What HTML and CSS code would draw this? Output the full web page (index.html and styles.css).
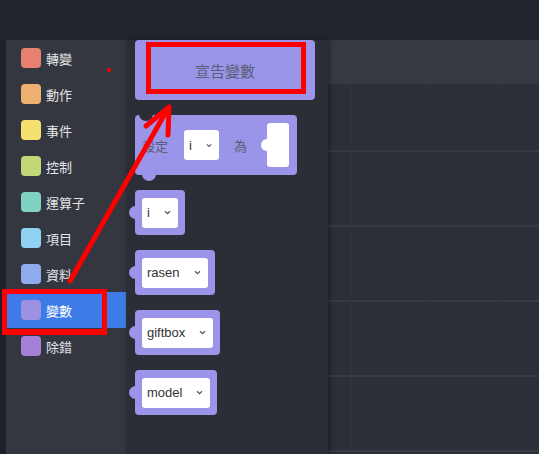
FILE: index.html
```html
<!DOCTYPE html>
<html>

<head>
  <link rel="stylesheet" href="styles.css">
</head>

<body>
  <div class="topbar"></div>

  <div class="main">
    <div class="edge"></div>

    <div class="categories">
      <div class="cat"><span class="swatch c-turn"></span>轉變</div>
      <div class="cat"><span class="swatch c-motion"></span>動作</div>
      <div class="cat"><span class="swatch c-event"></span>事件</div>
      <div class="cat"><span class="swatch c-control"></span>控制</div>
      <div class="cat"><span class="swatch c-operator"></span>運算子</div>
      <div class="cat"><span class="swatch c-list"></span>項目</div>
      <div class="cat"><span class="swatch c-data"></span>資料</div>
      <div class="cat active"><span class="swatch c-var"></span>變數</div>
      <div class="cat"><span class="swatch c-debug"></span>除錯</div>
    </div>

    <div class="flyout">
      <div class="block btn-block">宣告變數</div>

      <div class="block set-block">
        <span class="label">設定</span>
        <span class="dropdown">i
          <svg class="chev" width="7" height="5" viewBox="0 0 7 5"><path d="M1 1.2 L3.5 3.6 L6 1.2" fill="none" stroke="#555" stroke-width="1.2"/></svg>
        </span>
        <span class="label to">為</span>
        <span class="slot"></span>
      </div>

      <div class="block value-block">
        <span class="dropdown">i
          <svg class="chev" width="7" height="5" viewBox="0 0 7 5"><path d="M1 1.2 L3.5 3.6 L6 1.2" fill="none" stroke="#555" stroke-width="1.2"/></svg>
        </span>
      </div>
      <div class="block value-block">
        <span class="dropdown">rasen
          <svg class="chev" width="7" height="5" viewBox="0 0 7 5"><path d="M1 1.2 L3.5 3.6 L6 1.2" fill="none" stroke="#555" stroke-width="1.2"/></svg>
        </span>
      </div>
      <div class="block value-block">
        <span class="dropdown">giftbox
          <svg class="chev" width="7" height="5" viewBox="0 0 7 5"><path d="M1 1.2 L3.5 3.6 L6 1.2" fill="none" stroke="#555" stroke-width="1.2"/></svg>
        </span>
      </div>
      <div class="block value-block">
        <span class="dropdown">model
          <svg class="chev" width="7" height="5" viewBox="0 0 7 5"><path d="M1 1.2 L3.5 3.6 L6 1.2" fill="none" stroke="#555" stroke-width="1.2"/></svg>
        </span>
      </div>
    </div>

    <div class="workspace">
      <div class="ws-head"></div>
      <div class="ws-grid"></div>
    </div>
  </div>

  <!-- annotations drawn over the screenshot -->
  <div class="mark mark-declare"></div>
  <div class="mark mark-category"></div>
  <div class="dot"></div>
  <svg class="arrow" width="539" height="454" viewBox="0 0 539 454">
    <line x1="70" y1="281" x2="167" y2="110" stroke="#ff0000" stroke-width="5" stroke-linecap="round"/>
    <polyline points="146,126 169,107 168,135" fill="none" stroke="#ff0000" stroke-width="5" stroke-linecap="round" stroke-linejoin="round"/>
  </svg>
</body>

</html>
```

FILE: styles.css
```css
:root {
  --top: #22252d;
  --edge: #1d2027;
  --sidebar: #343740;
  --flyout: #2b2e37;
  --ws-head: #363a43;
  --ws-bg: #2b2f37;
  --block: #9b95e9;
  --block-text: #575e75;
  --selected: #3d7be8;
  --red: #ff0000;
}

* {
  margin: 0;
  padding: 0;
  box-sizing: border-box;
}

body {
  width: 539px;
  height: 454px;
  overflow: hidden;
  background-color: var(--top);
  font-family: 'Noto Sans CJK TC', 'Noto Sans', sans-serif;
  position: relative;
}

.topbar {
  height: 40px;
  background-color: var(--top);
}

.main {
  display: flex;
  height: 414px;
}

.edge {
  width: 6px;
  background-color: var(--edge);
}

/* category list */
.categories {
  width: 120px;
  background-color: var(--sidebar);
}

.cat {
  height: 36px;
  display: flex;
  align-items: center;
  padding-left: 15px;
  font-size: 13px;
  color: #e4e5e8;
}

.cat.active {
  background-color: var(--selected);
  color: #ffffff;
}

.swatch {
  width: 20px;
  height: 20px;
  border-radius: 4px;
  margin-right: 5px;
}

.c-turn { background-color: #e8806f; }
.c-motion { background-color: #eeb06f; }
.c-event { background-color: #f6e06f; }
.c-control { background-color: #c2d878; }
.c-operator { background-color: #80d3c2; }
.c-list { background-color: #8ed1f0; }
.c-data { background-color: #8eabee; }
.c-var { background-color: #9f91e2; }
.c-debug { background-color: #a67fd7; }

/* flyout */
.flyout {
  width: 202px;
  background-color: var(--flyout);
  display: flex;
  flex-direction: column;
  align-items: flex-start;
  gap: 15px;
  padding-left: 9px;
  position: relative;
  z-index: 1;
  box-shadow: 2px 0 5px rgba(0, 0, 0, 0.35);
}

.block {
  background-color: var(--block);
  border-radius: 4px;
  position: relative;
  display: flex;
  align-items: center;
  color: var(--block-text);
}

.btn-block {
  width: 180px;
  height: 60px;
  justify-content: center;
  font-size: 15px;
}

.set-block {
  width: 162px;
  height: 60px;
  padding-left: 7px;
}

.set-block::before {
  content: '';
  position: absolute;
  top: -8px;
  left: 4px;
  width: 14px;
  height: 14px;
  border-radius: 50%;
  background-color: var(--flyout);
}

.set-block::after {
  content: '';
  position: absolute;
  bottom: -6px;
  left: 7px;
  width: 14px;
  height: 14px;
  border-radius: 50%;
  background-color: var(--block);
}

.label {
  font-size: 13px;
  margin-right: 16px;
}

.label.to {
  margin-left: 15px;
  margin-right: 20px;
}

.slot {
  width: 22px;
  height: 44px;
  background-color: #ffffff;
  border-radius: 3px;
  position: relative;
}

.slot::before {
  content: '';
  position: absolute;
  left: -6px;
  top: 16px;
  width: 12px;
  height: 12px;
  border-radius: 50%;
  background-color: #ffffff;
}

.value-block {
  height: 45px;
  padding: 7px;
}

.value-block::before {
  content: '';
  position: absolute;
  left: -6px;
  top: 16px;
  width: 13px;
  height: 13px;
  border-radius: 50%;
  background-color: var(--block);
}

.dropdown {
  height: 30px;
  background-color: #ffffff;
  border-radius: 3px;
  display: flex;
  align-items: center;
  gap: 14px;
  padding: 0 7px 0 5px;
  font-family: 'Liberation Sans', Arial, sans-serif;
  font-size: 13px;
  color: #333333;
}

.set-block .dropdown {
  width: 35px;
}

.chev {
  display: block;
}

/* workspace */
.workspace {
  flex: 1;
  display: flex;
  flex-direction: column;
}

.ws-head {
  height: 44px;
  background-color: var(--ws-head);
}

.ws-grid {
  flex: 1;
  background-color: var(--ws-bg);
  background-image:
    linear-gradient(to right, #31353d 1px, transparent 1px),
    linear-gradient(to bottom, #363a42 2px, transparent 2px);
  background-size: 75px 75px;
  background-position: 23px 66px;
}

/* annotations */
.mark {
  position: absolute;
  z-index: 2;
  border: 5px solid var(--red);
}

.mark-declare {
  left: 146px;
  top: 42px;
  width: 160px;
  height: 52px;
}

.mark-category {
  left: 2px;
  top: 289px;
  width: 105px;
  height: 46px;
  border-width: 5px 5px 6px 5px;
}

.dot {
  position: absolute;
  z-index: 2;
  left: 107px;
  top: 68px;
  width: 4px;
  height: 4px;
  border-radius: 50%;
  background-color: var(--red);
}

.arrow {
  position: absolute;
  z-index: 2;
  left: 0;
  top: 0;
  pointer-events: none;
}
```
